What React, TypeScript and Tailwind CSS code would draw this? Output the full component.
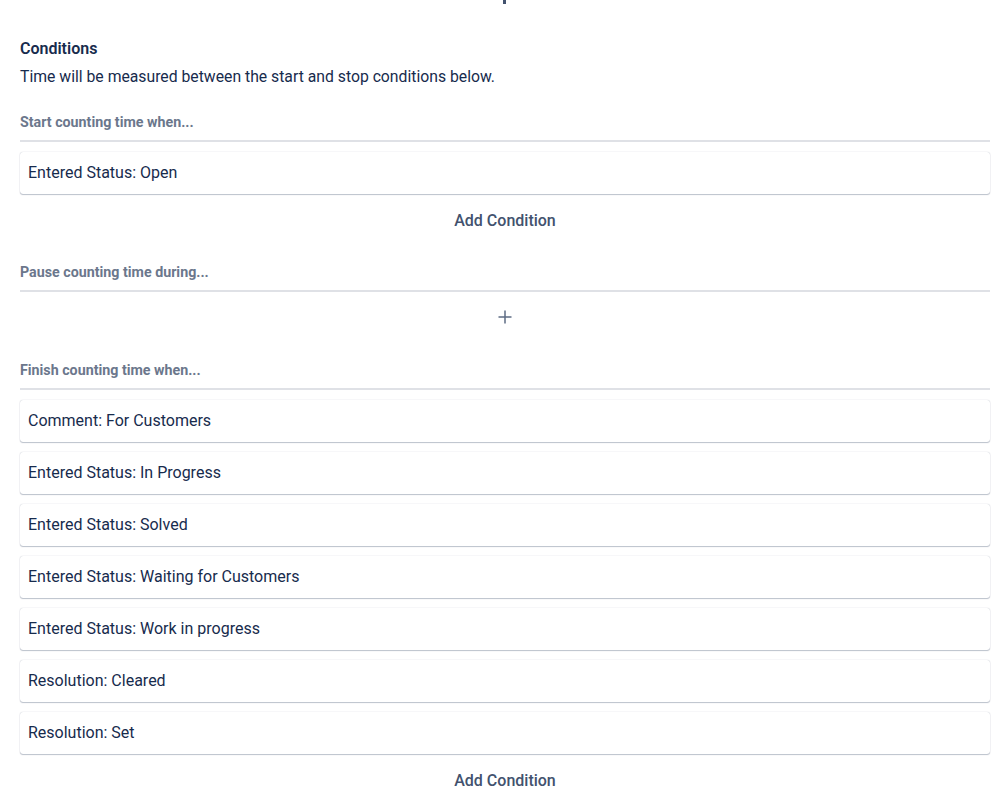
import React from "react";

const Card = ({ text }: { text: string }) => (
  <div className="h-[42px] flex items-center px-2 rounded-[3px] bg-white shadow-[0_1px_1px_rgba(9,30,66,0.25),0_0_1px_rgba(9,30,66,0.31)] text-[16px] text-[#172B4D]">
    {text}
  </div>
);

const Label = ({ text }: { text: string }) => (
  <div className="border-b-2 border-[#DFE1E6] pb-[8px] text-[14.25px] font-bold text-[#6B778C] leading-[20px]">
    {text}
  </div>
);

export default function App() {
  const finish = [
    "Comment: For Customers",
    "Entered Status: In Progress",
    "Entered Status: Solved",
    "Entered Status: Waiting for Customers",
    "Entered Status: Work in progress",
    "Resolution: Cleared",
    "Resolution: Set",
  ];
  return (
    <div className="w-[998px] h-[804px] overflow-hidden bg-white font-['Roboto','Liberation_Sans',Arial,sans-serif] pl-5 pr-2">
      <div className="flex justify-center">
        <div className="w-[3px] h-[4px] bg-[#42526E] ml-[-1px]" />
      </div>
      <div className="mt-[35px] text-[16px] font-semibold text-[#172B4D] leading-[20px]">Conditions</div>
      <div className="mt-[8px] text-[15.75px] text-[#172B4D] leading-[20px]">
        Time will be measured between the start and stop conditions below.
      </div>
      <div className="mt-[25px]">
        <Label text="Start counting time when..." />
      </div>
      <div className="mt-[10px]">
        <Card text="Entered Status: Open" />
      </div>
      <div className="mt-[17px] text-center text-[16px] font-medium text-[#42526E] leading-[20px]">Add Condition</div>
      <div className="mt-[31px]">
        <Label text="Pause counting time during..." />
      </div>
      <div className="flex justify-center mt-[18px]">
        <svg width="14" height="14" viewBox="0 0 14 14" className="text-[#5E6C84]">
          <path d="M7 0.5V13.5M0.5 7H13.5" stroke="currentColor" strokeWidth="1.5" />
        </svg>
      </div>
      <div className="mt-[36px]">
        <Label text="Finish counting time when..." />
      </div>
      <div className="mt-[10px] flex flex-col gap-[10px]">
        {finish.map((f) => (
          <Card key={f} text={f} />
        ))}
      </div>
      <div className="mt-[17px] text-center text-[16px] font-medium text-[#42526E] leading-[20px]">Add Condition</div>
    </div>
  );
}
